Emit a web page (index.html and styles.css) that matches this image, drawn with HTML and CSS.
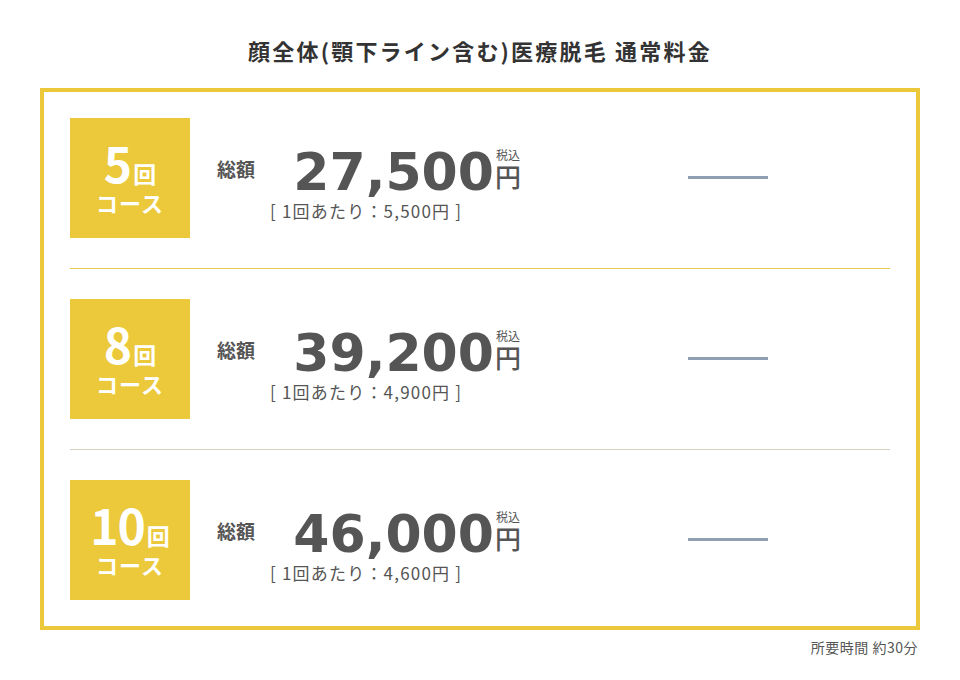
FILE: index.html
```html
<!DOCTYPE html>
<html lang="ja">
<head>
<meta charset="utf-8">
<link rel="stylesheet" href="styles.css">
</head>
<body>
<h1 class="title">顔全体(顎下ライン含む)医療脱毛 通常料金</h1>
<div class="frame">
  <div class="row">
    <div class="badge"><div class="cnt"><span class="n">5</span><span class="k">回</span></div><div class="course">コース</div></div>
    <div class="info">
      <div class="top"><span class="lbl">総額</span><div class="price"><span class="num">27,500</span><span class="yen"><span class="tax">税込</span><span class="en">円</span></span></div></div>
      <div class="per">[ 1回あたり：5,500円 ]</div>
    </div>
    <div class="dash"></div>
  </div>
  <div class="row">
    <div class="badge"><div class="cnt"><span class="n">8</span><span class="k">回</span></div><div class="course">コース</div></div>
    <div class="info">
      <div class="top"><span class="lbl">総額</span><div class="price"><span class="num">39,200</span><span class="yen"><span class="tax">税込</span><span class="en">円</span></span></div></div>
      <div class="per">[ 1回あたり：4,900円 ]</div>
    </div>
    <div class="dash"></div>
  </div>
  <div class="row">
    <div class="badge"><div class="cnt"><span class="n">10</span><span class="k">回</span></div><div class="course">コース</div></div>
    <div class="info">
      <div class="top"><span class="lbl">総額</span><div class="price"><span class="num">46,000</span><span class="yen"><span class="tax">税込</span><span class="en">円</span></span></div></div>
      <div class="per">[ 1回あたり：4,600円 ]</div>
    </div>
    <div class="dash"></div>
  </div>
</div>
<p class="note">所要時間 約30分</p>
</body>
</html>
```
FILE: styles.css
```css
* { box-sizing: border-box; }
html, body { margin: 0; padding: 0; background: #fff; }
body {
  font-family: "Noto Sans CJK JP", "Noto Sans", sans-serif;
  color: #555;
  width: 960px;
}
.title {
  margin: 0;
  padding-top: 35px;
  height: 88px;
  font-size: 22px;
  line-height: 30px;
  font-weight: 700;
  color: #333;
  text-align: center;
  letter-spacing: 2.2px;
}
.frame {
  margin: 0 40px;
  width: 880px;
  border: 4px solid #ebc93b;
  padding: 26px 26px;
}
.row {
  display: flex;
  align-items: flex-start;
  padding: 30px 0;
  border-bottom: 1px solid #e6cd55;
}
.row:first-child { padding-top: 0; }
.row:nth-child(2) { border-bottom-color: #d6d2c0; }
.row:last-child { padding-bottom: 0; border-bottom: none; }
.badge {
  width: 120px;
  height: 120px;
  background: #ebc93b;
  color: #fff;
  font-weight: 700;
  display: flex;
  flex-direction: column;
  align-items: center;
  justify-content: center;
  padding-bottom: 4px;
}
.cnt { display: flex; align-items: baseline; line-height: 1; }
.n { font-size: 48px; line-height: 48px; letter-spacing: -1px; }
.k { font-size: 23px; margin-left: 2px; }
.course { font-size: 22px; line-height: 24px; margin-top: 4px; letter-spacing: 1px; }
.info {
  margin-left: 27px;
  width: 304px;
  padding-top: 28px;
}
.top { display: flex; align-items: flex-start; }
.lbl {
  font-size: 19px;
  line-height: 19px;
  font-weight: 700;
  margin-top: 13px;
}
.price { margin-left: auto; display: flex; align-items: flex-start; }
.num {
  font-family: "DejaVu Sans", sans-serif;
  font-weight: 700;
  font-size: 52px;
  line-height: 52px;
}
.yen { display: flex; flex-direction: column; align-items: center; margin-top: 2px; margin-left: 1px; }
.tax { font-size: 12px; line-height: 13px; margin-bottom: 2px; }
.en { font-size: 26px; line-height: 26px; font-weight: 500; }
.per {
  margin-left: 53px;
  margin-top: 3px;
  font-size: 17px;
  line-height: 20px;
  letter-spacing: 1.2px;
  font-weight: 400;
}
.dash {
  margin-left: 167px;
  margin-top: 58px;
  width: 80px;
  height: 3px;
  background: #8fa0b3;
}
.note {
  margin: 8px 0 0;
  padding-right: 42px;
  text-align: right;
  font-size: 14px;
  line-height: 18px;
  letter-spacing: 0.5px;
  color: #555;
}
```
